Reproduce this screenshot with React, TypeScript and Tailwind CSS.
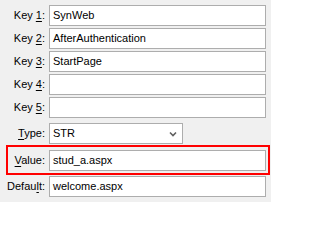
import React from "react";

type Row = { pre: string; key: string; post: string; value: string };

const keys: Row[] = [
  { pre: "Key ", key: "1", post: ":", value: "SynWeb" },
  { pre: "Key ", key: "2", post: ":", value: "AfterAuthentication" },
  { pre: "Key ", key: "3", post: ":", value: "StartPage" },
  { pre: "Key ", key: "4", post: ":", value: "" },
  { pre: "Key ", key: "5", post: ":", value: "" },
];

function Label({ pre, k, post, className }: { pre: string; k: string; post: string; className: string }) {
  return (
    <span className={`${className} text-right whitespace-pre`}>
      {pre}
      <span className="underline underline-offset-2">{k}</span>
      {post}
    </span>
  );
}

function Field({ value, className = "w-[217px]" }: { value: string; className?: string }) {
  return (
    <div className={`${className} h-[21px] border border-[#adadad] bg-white pl-[3px] flex items-center`}>
      {value}
    </div>
  );
}

export default function App() {
  return (
    <div
      className="w-[271px] h-[202px] bg-[#f0f0f0] text-[11px] text-black pt-[5px] flex flex-col"
      style={{ fontFamily: '"Liberation Sans", Arial, sans-serif' }}
    >
      <div className="flex flex-col gap-[2px]">
        {keys.map((r) => (
          <div key={r.key} className="flex items-center gap-[4px]">
            <Label pre={r.pre} k={r.key} post={r.post} className="w-[45px]" />
            <Field value={r.value} />
          </div>
        ))}
      </div>

      <div className="flex items-center gap-[4px] mt-[5px]">
        <Label pre="" k="T" post="ype:" className="w-[45px]" />
        <div className="w-[134px] h-[21px] border border-[#adadad] bg-white pl-[3px] pr-[5px] flex items-center justify-between">
          <span>STR</span>
          <svg width="8" height="6" viewBox="0 0 8 6">
            <path d="M1 1.5 L4 4.5 L7 1.5" fill="none" stroke="#606060" strokeWidth="1.6" />
          </svg>
        </div>
      </div>

      <div className="ml-[6px] mt-[1px] w-[264px] h-[30px] border-2 border-[#ff0000] flex items-center gap-[4px] pt-[1px]">
        <Label pre="" k="V" post="alue:" className="w-[37px]" />
        <Field value="stud_a.aspx" />
      </div>

      <div className="flex items-center gap-[4px] mt-[1px]">
        <Label pre="Defau" k="l" post="t:" className="w-[45px]" />
        <Field value="welcome.aspx" />
      </div>
    </div>
  );
}
